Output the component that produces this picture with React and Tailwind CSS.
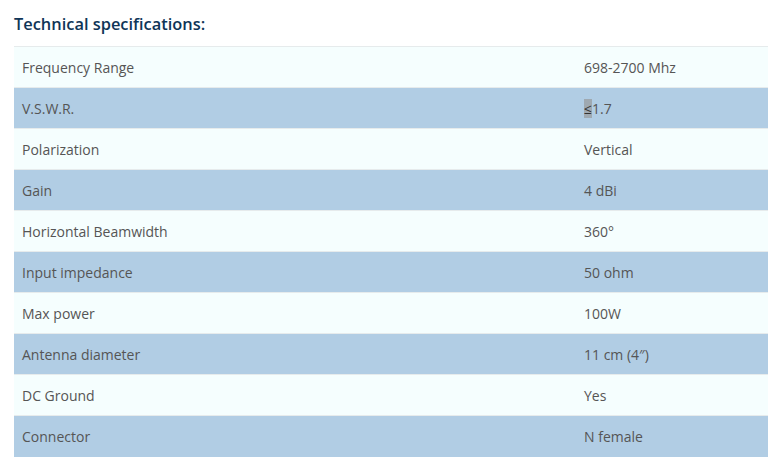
const specs = [
  ["Frequency Range", "698-2700 Mhz"],
  ["V.S.W.R.", "≤1.7"],
  ["Polarization", "Vertical"],
  ["Gain", "4 dBi"],
  ["Horizontal Beamwidth", "360°"],
  ["Input impedance", "50 ohm"],
  ["Max power", "100W"],
  ["Antenna diameter", "11 cm (4″)"],
  ["DC Ground", "Yes"],
  ["Connector", "N female"],
]

export default function App() {
  return (
    <div className="min-h-[474px] overflow-hidden bg-white pl-[14px] pt-[12px] font-['Open_Sans',sans-serif]">
      <h2 className="text-[16.4px] font-semibold leading-[24px] text-[#0f3557]">Technical specifications:</h2>
      <table className="mt-[10px] w-full border-collapse text-[14px] text-[#555]">
        <tbody>
          {specs.map(([label, value], i) => (
            <tr
              key={label}
              className={`${i % 2 ? "bg-[#b1cde4]" : "bg-[#f5fefe]"} border-t border-[#e6ebec]`}
            >
              <td className="h-[41px] pl-[8px] align-middle">{label}</td>
              <td className="w-[184px] pl-0 align-middle">
                {label === "V.S.W.R." ? (
                  <>
                    <span className="bg-[#9fa9b1] text-[#333]">≤</span>1.7
                  </>
                ) : (
                  value
                )}
              </td>
            </tr>
          ))}
        </tbody>
      </table>
    </div>
  )
}
